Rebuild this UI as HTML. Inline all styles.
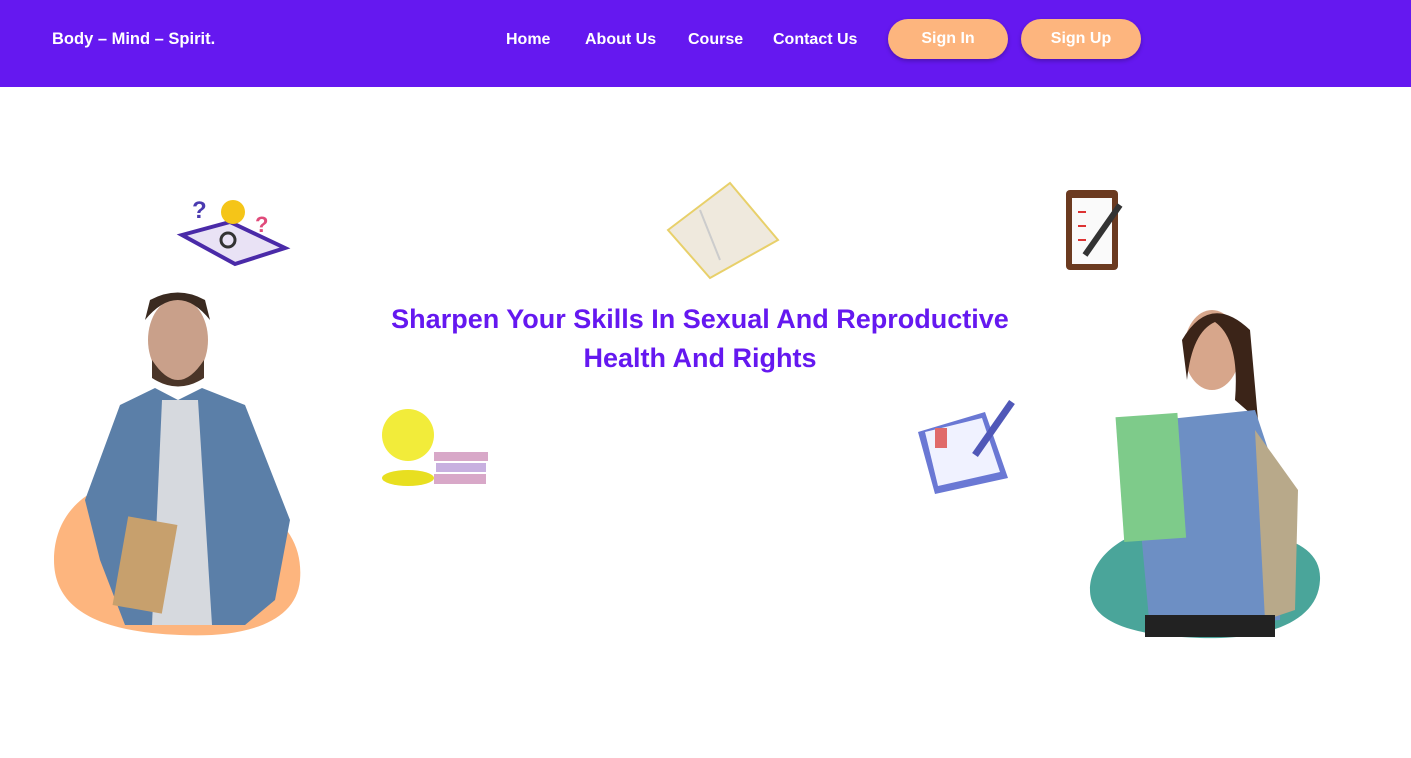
<!DOCTYPE html>
<html><head><meta charset="utf-8"><style>
*{margin:0;padding:0;box-sizing:border-box}
body{width:1411px;height:758px;background:#fff;font-family:"Liberation Sans",sans-serif;position:relative;overflow:hidden}
.hdr{position:absolute;left:0;top:0;width:1411px;height:87px;background:#6518F0;color:#fff}
.logo{position:absolute;left:52px;top:30px;font-size:16.5px;font-weight:bold}
.nav{position:absolute;top:31px;font-size:16px;font-weight:bold}
.btn{position:absolute;top:19px;height:40px;border-radius:20px;background:#FDB57E;color:#fff;font-size:16px;font-weight:bold;text-align:center;line-height:40px;box-shadow:0 2px 4px rgba(0,0,0,.25)}
h1{position:absolute;left:350px;width:700px;top:300px;text-align:center;color:#6518F0;font-size:27px;line-height:39px;font-weight:bold}
.a{position:absolute}
</style></head><body>
<div class="hdr">
<div class="logo">Body – Mind – Spirit.</div>
<div class="nav" style="left:506px">Home</div>
<div class="nav" style="left:585px">About Us</div>
<div class="nav" style="left:688px">Course</div>
<div class="nav" style="left:773px">Contact Us</div>
<div class="btn" style="left:888px;width:120px">Sign In</div>
<div class="btn" style="left:1021px;width:120px">Sign Up</div>
</div>
<h1>Sharpen Your Skills In Sexual And Reproductive<br>Health And Rights</h1>
<svg class="a" style="left:0;top:0" width="1411" height="758">
<path d="M54 560 C54 500 110 470 170 480 C250 490 305 520 300 580 C296 625 240 638 180 635 C100 632 54 610 54 560Z" fill="#FDB57E"/>
<ellipse cx="178" cy="340" rx="30" ry="42" fill="#c9a08a"/>
<path d="M145 320 Q178 280 210 320 L205 300 Q178 285 150 300Z" fill="#3a2a20"/>
<path d="M152 360 Q178 400 204 360 L204 378 Q178 395 152 378Z" fill="#4a3528"/>
<path d="M120 405 L155 388 L178 400 L202 388 L245 405 L290 520 L275 600 L245 625 L125 625 L100 560 L85 500Z" fill="#5b7fa8"/>
<path d="M162 400 L198 400 L212 625 L152 625Z" fill="#d6d9de"/>
<rect x="120" y="520" width="50" height="90" fill="#c7a06d" transform="rotate(10 145 565)"/>
<path d="M1090 590 C1090 550 1140 520 1200 525 C1270 530 1322 540 1320 580 C1318 625 1260 640 1200 638 C1140 636 1090 625 1090 590Z" fill="#4aa59a"/>
<ellipse cx="1212" cy="350" rx="28" ry="40" fill="#d7a68b"/>
<path d="M1182 340 Q1210 292 1250 330 L1258 420 L1235 400 Q1240 340 1215 322 Q1192 332 1187 380Z" fill="#3b2418"/>
<path d="M1160 420 L1255 410 L1285 500 L1280 620 L1150 630 L1140 520Z" fill="#6d8fc4"/>
<rect x="1120" y="415" width="62" height="125" fill="#7ecb8a" transform="rotate(-4 1150 480)"/>
<path d="M1255 430 L1298 490 L1295 610 L1265 620Z" fill="#b8a98a"/>
<rect x="1145" y="615" width="130" height="22" fill="#222"/>
<path d="M182 235 L230 222 L285 248 L235 264Z" fill="#e9e2f5" stroke="#4a2aa8" stroke-width="4"/>
<circle cx="233" cy="212" r="12" fill="#f5c518"/>
<circle cx="228" cy="240" r="7" fill="none" stroke="#333" stroke-width="3"/>
<text x="192" y="218" font-size="24" font-weight="bold" fill="#4a3ab0">?</text>
<text x="255" y="232" font-size="22" font-weight="bold" fill="#e04a7a">?</text>
<path d="M668 230 L730 183 L778 240 L710 278Z" fill="#efe9dd" stroke="#e8d06a" stroke-width="2"/>
<path d="M700 210 L720 260" stroke="#ccc" stroke-width="2"/>
<rect x="1066" y="190" width="52" height="80" rx="4" fill="#6b3a20"/>
<rect x="1072" y="198" width="40" height="66" fill="#fafafa"/>
<path d="M1085 255 L1120 205" stroke="#333" stroke-width="6"/>
<path d="M1078 212 h8 M1078 226 h8 M1078 240 h8" stroke="#d33" stroke-width="2"/>
<circle cx="408" cy="435" r="26" fill="#f2ec3a"/>
<ellipse cx="408" cy="478" rx="26" ry="8" fill="#e8df20"/>
<rect x="434" y="452" width="54" height="9" fill="#d8a8c8"/><rect x="436" y="463" width="50" height="9" fill="#c8b0e0"/><rect x="434" y="474" width="52" height="10" fill="#d8a8c8"/>
<path d="M918 432 L985 412 L1008 478 L935 494Z" fill="#6a78d4"/>
<path d="M925 432 L982 418 L1000 472 L938 486Z" fill="#f0f2ff"/>
<path d="M975 455 L1012 402" stroke="#5058b8" stroke-width="7"/>
<rect x="935" y="428" width="12" height="20" fill="#e06a6a"/>
</svg>
</body></html>
